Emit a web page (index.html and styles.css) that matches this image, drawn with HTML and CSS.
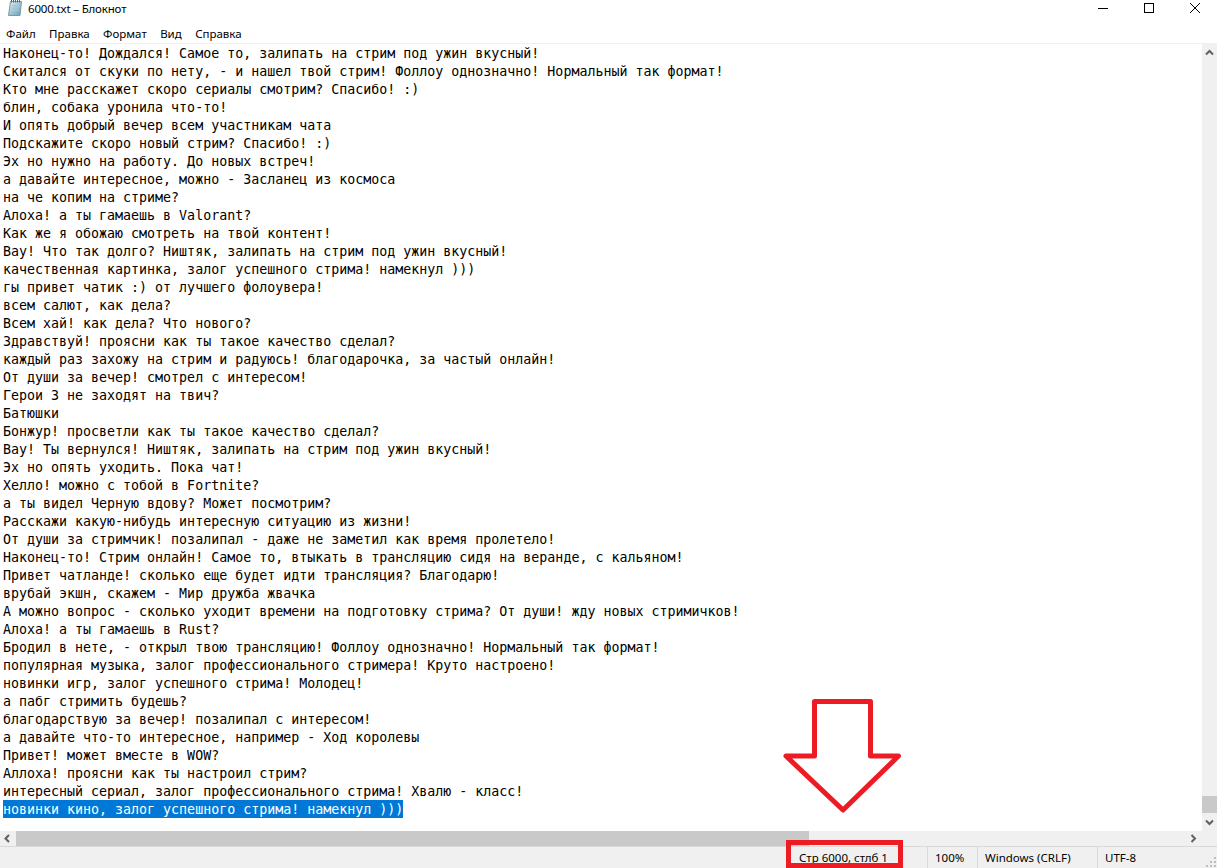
FILE: index.html
```html
<!DOCTYPE html>
<html lang="ru">
<head>
<meta charset="utf-8">
<title>6000.txt – Блокнот</title>
<link rel="stylesheet" href="styles.css">
</head>
<body>
<div class="window">
  <header class="titlebar">
    <svg class="app-icon" width="16" height="16" viewBox="0 0 16 16">
      <defs>
        <linearGradient id="page" x1="0" y1="0" x2="1" y2="1">
          <stop offset="0" stop-color="#e4f2f7"/>
          <stop offset="1" stop-color="#5f9db8"/>
        </linearGradient>
      </defs>
      <path d="M3.500 1.500H14.500L13 15.500H1.500Z" fill="url(#page)" stroke="#7d97a5"/>
      <path d="M4.500 0V2.500M6.500 0V2.500M8.500 0V2.500M10.500 0V2.500M12.500 0V2.500" stroke="#59666e"/>
      <path d="M5 5.500H12.500M4.500 8H12M4.500 10.500H12" stroke="#a8c6d4"/>
    </svg>
    <span class="title">6000.txt – Блокнот</span>
    <div class="caption">
      <svg class="cap-btn" width="46" height="16" viewBox="0 0 46 16"><path d="M18 8.500H28" stroke="#000"/></svg>
      <svg class="cap-btn" width="46" height="16" viewBox="0 0 46 16"><rect x="18.500" y="3.500" width="9" height="9" fill="none" stroke="#000"/></svg>
      <svg class="cap-btn" width="46" height="16" viewBox="0 0 46 16"><path d="M18 3L28 13M28 3L18 13" stroke="#000"/></svg>
    </div>
  </header>
  <nav class="menubar">
    <span>Файл</span><span>Правка</span><span>Формат</span><span>Вид</span><span>Справка</span>
  </nav>
  <main class="editor">
    <div class="text">
      <div>Наконец-то! Дождался! Самое то, залипать на стрим под ужин вкусный!</div>
      <div>Скитался от скуки по нету, - и нашел твой стрим! Фоллоу однозначно! Нормальный так формат!</div>
      <div>Кто мне расскажет скоро сериалы смотрим? Спасибо! :)</div>
      <div>блин, собака уронила что-то!</div>
      <div>И опять добрый вечер всем участникам чата</div>
      <div>Подскажите скоро новый стрим? Спасибо! :)</div>
      <div>Эх но нужно на работу. До новых встреч!</div>
      <div>а давайте интересное, можно - Засланец из космоса</div>
      <div>на че копим на стриме?</div>
      <div>Алоха! а ты гамаешь в Valorant?</div>
      <div>Как же я обожаю смотреть на твой контент!</div>
      <div>Вау! Что так долго? Ништяк, залипать на стрим под ужин вкусный!</div>
      <div>качественная картинка, залог успешного стрима! намекнул )))</div>
      <div>гы привет чатик :) от лучшего фолоувера!</div>
      <div>всем салют, как дела?</div>
      <div>Всем хай! как дела? Что нового?</div>
      <div>Здравствуй! проясни как ты такое качество сделал?</div>
      <div>каждый раз захожу на стрим и радуюсь! благодарочка, за частый онлайн!</div>
      <div>От души за вечер! смотрел с интересом!</div>
      <div>Герои 3 не заходят на твич?</div>
      <div>Батюшки</div>
      <div>Бонжур! просветли как ты такое качество сделал?</div>
      <div>Вау! Ты вернулся! Ништяк, залипать на стрим под ужин вкусный!</div>
      <div>Эх но опять уходить. Пока чат!</div>
      <div>Хелло! можно с тобой в Fortnite?</div>
      <div>а ты видел Черную вдову? Может посмотрим?</div>
      <div>Расскажи какую-нибудь интересную ситуацию из жизни!</div>
      <div>От души за стримчик! позалипал - даже не заметил как время пролетело!</div>
      <div>Наконец-то! Стрим онлайн! Самое то, втыкать в трансляцию сидя на веранде, с кальяном!</div>
      <div>Привет чатланде! сколько еще будет идти трансляция? Благодарю!</div>
      <div>врубай экшн, скажем - Мир дружба жвачка</div>
      <div>А можно вопрос - сколько уходит времени на подготовку стрима? От души! жду новых стримичков!</div>
      <div>Алоха! а ты гамаешь в Rust?</div>
      <div>Бродил в нете, - открыл твою трансляцию! Фоллоу однозначно! Нормальный так формат!</div>
      <div>популярная музыка, залог профессионального стримера! Круто настроено!</div>
      <div>новинки игр, залог успешного стрима! Молодец!</div>
      <div>а пабг стримить будешь?</div>
      <div>благодарствую за вечер! позалипал с интересом!</div>
      <div>а давайте что-то интересное, например - Ход королевы</div>
      <div>Привет! может вместе в WOW?</div>
      <div>Аллоха! проясни как ты настроил стрим?</div>
      <div>интересный сериал, залог профессионального стрима! Хвалю - класс!</div>
      <div class="selected">новинки кино, залог успешного стрима! намекнул )))</div>
    </div>
    <div class="vscroll">
      <svg width="15" height="18" viewBox="0 0 15 18"><path d="M4 10.500L7.500 7L11 10.500" fill="none" stroke="#606060" stroke-width="2"/></svg>
      <div class="vtrack"><div class="vthumb"></div></div>
      <svg width="15" height="18" viewBox="0 0 15 18"><path d="M4 7.500L7.500 11L11 7.500" fill="none" stroke="#606060" stroke-width="2"/></svg>
    </div>
  </main>
  <div class="hscroll">
    <svg width="16" height="15" viewBox="0 0 16 15"><path d="M9 4L5.500 7.500L9 11" fill="none" stroke="#606060" stroke-width="2"/></svg>
    <div class="htrack"><div class="hthumb"></div></div>
    <svg width="17" height="15" viewBox="0 0 17 15"><path d="M6.500 4L10 7.500L6.500 11" fill="none" stroke="#606060" stroke-width="2"/></svg>
  </div>
  <footer class="statusbar">
    <div class="cell cell-pos">Стр 6000, стлб 1</div>
    <div class="cell cell-zoom">100%</div>
    <div class="cell cell-eol">Windows (CRLF)</div>
    <div class="cell cell-enc">UTF-8</div>
    <svg class="grip" width="12" height="12" viewBox="0 0 12 12"><path d="M9 1h2v2H9zM5 5h2v2H5zM9 5h2v2H9zM1 9h2v2H1zM5 9h2v2H5zM9 9h2v2H9z" fill="#bdbdbd"/></svg>
  </footer>
  <svg class="annotation" width="1217" height="868" viewBox="0 0 1217 868">
    <path d="M814.500 701.500H870.500V756H898.500L843 810L786 756H814.500Z" fill="#fff" stroke="#ed1c24" stroke-width="5" stroke-linejoin="round"/>
    <rect x="788.500" y="842.500" width="112" height="23" fill="none" stroke="#ed1c24" stroke-width="5"/>
  </svg>
</div>
</body>
</html>
```

FILE: styles.css
```css
html, body {
  margin: 0;
  padding: 0;
  background: #fff;
}
.window {
  position: relative;
  width: 1217px;
  height: 868px;
  overflow: hidden;
  display: flex;
  flex-direction: column;
  font-family: "Noto Sans", sans-serif;
  font-size: 11.5px;
  color: #000;
}
.titlebar {
  height: 24px;
  flex: none;
  display: flex;
  align-items: flex-start;
  padding-left: 7px;
}
.app-icon {
  flex: none;
}
.title {
  margin-left: 5px;
  line-height: 18px;
  letter-spacing: -0.17px;
}
.caption {
  margin-left: auto;
  display: flex;
  margin-right: -1px;
}
.cap-btn {
  display: block;
  width: 46px;
}
.menubar {
  height: 19px;
  flex: none;
  display: flex;
  gap: 13.4px;
  padding-left: 6px;
  line-height: 20px;
  border-bottom: 1px solid #f0f0f0;
}
.editor {
  flex: 1;
  min-height: 0;
  display: flex;
}
.text {
  flex: 1;
  min-width: 0;
  padding: 0 0 0 3px;
  font-family: "DejaVu Sans Mono", monospace;
  font-size: 13.3px;
  white-space: nowrap;
  overflow: hidden;
}
.text div {
  height: 18px;
  line-height: 20px;
}
.text .selected {
  width: fit-content;
  background: #0078d7;
  color: #fff;
}
.vscroll {
  flex: none;
  width: 15px;
  display: flex;
  flex-direction: column;
  background: #f0f0f0;
}
.vscroll svg, .hscroll svg {
  display: block;
  flex: none;
}
.vtrack {
  flex: 1;
  display: flex;
  flex-direction: column;
  justify-content: flex-end;
}
.vthumb {
  height: 17px;
  background: #c9c9c9;
}
.hscroll {
  flex: none;
  height: 15px;
  display: flex;
  background: #f0f0f0;
  padding-right: 15px;
}
.htrack {
  flex: 1;
}
.hthumb {
  width: 793px;
  height: 15px;
  background: #c9c9c9;
}
.statusbar {
  flex: none;
  height: 21px;
  border-top: 1px solid #d9d9d9;
  background: #f0f0f0;
  display: flex;
  position: relative;
  line-height: 22px;
}
.cell {
  box-sizing: border-box;
  height: 21px;
  padding-left: 7px;
  border-left: 1px solid #d9d9d9;
  white-space: nowrap;
}
.cell-pos {
  margin-left: 790px;
  width: 137px;
  border-left: 0;
  padding-left: 9px;
}
.cell-zoom { width: 50px; }
.cell-eol { width: 120px; }
.cell-enc { flex: 1; }
.grip {
  position: absolute;
  right: 0;
  bottom: 0;
}
.annotation {
  position: absolute;
  left: 0;
  top: 0;
  pointer-events: none;
}
```
